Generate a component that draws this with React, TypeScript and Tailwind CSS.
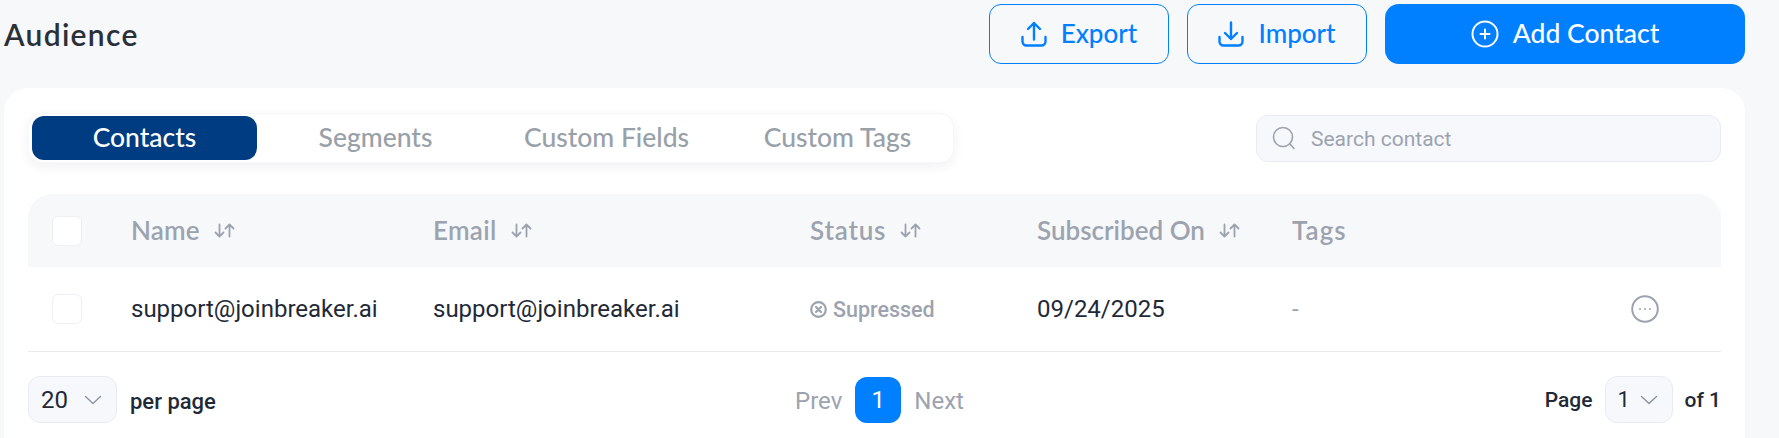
const head = "font-['Lato',sans-serif]";

function SortIcon() {
  return (
    <svg width="21" height="15" viewBox="0 0 21 15" fill="none" stroke="#9ca3af" strokeWidth="1.800" strokeLinecap="round" strokeLinejoin="round" className="shrink-0">
      <path d="M5.500 1.500v12M1.500 9.500l4 4 4-4" />
      <path d="M15.500 13.500v-12M11.500 5.500l4-4 4 4" />
    </svg>
  );
}

function Chevron() {
  return (
    <svg width="18" height="10" viewBox="0 0 18 10" fill="none" stroke="#8b93a1" strokeWidth="1.400" strokeLinecap="round" strokeLinejoin="round">
      <path d="M1.500 1.500L9 8.500l7.500-7" />
    </svg>
  );
}

function Tray({ up }: { up: boolean }) {
  return (
    <svg width="26" height="26" viewBox="0 0 26 26" fill="none" stroke="#007fff" strokeWidth="2.400" strokeLinecap="round" strokeLinejoin="round">
      <path d="M1.500 16v4.500a4 4 0 0 0 4 4h15a4 4 0 0 0 4-4V16" />
      {up ? <path d="M13 18.500V2M7 8l6-6 6 6" /> : <path d="M13 1.500V18M7 12l6 6 6-6" />}
    </svg>
  );
}

function Header({ label, sort, className, labelClass }: { label: string; sort?: boolean; className: string; labelClass: string }) {
  return (
    <div className={`flex items-center gap-[14px] ${className}`}>
      <span className={`${head} text-[26px] font-semibold text-[#9ca3af] ${labelClass}`}>{label}</span>
      {sort && <SortIcon />}
    </div>
  );
}

function Checkbox() {
  return <div className="w-[30px] h-[30px] rounded-[6px] bg-white border border-[#eef0f3] shrink-0" />;
}

export default function App() {
  return (
    <div className="w-[1779px] h-[438px] overflow-hidden bg-[#f7f8fa] pl-[4px] pr-[34px] pt-[4px] font-['Roboto',sans-serif]">
      <div className="flex items-center justify-between h-[60px]">
        <h1 className={`${head} text-[30px] font-semibold tracking-[1.300px] text-[#2b2f38]`}>Audience</h1>
        <div className="flex gap-[18px]">
          <button className="w-[180px] h-[60px] rounded-[12px] border border-[#007fff] flex items-center justify-center gap-[14px] text-[#007fff]">
            <Tray up />
            <span className={`${head} text-[26px] font-medium pb-[2px]`}>Export</span>
          </button>
          <button className="w-[180px] h-[60px] rounded-[12px] border border-[#007fff] flex items-center justify-center gap-[14px] text-[#007fff]">
            <Tray up={false} />
            <span className={`${head} text-[26px] font-medium pb-[2px]`}>Import</span>
          </button>
          <button className="w-[360px] h-[60px] rounded-[14px] bg-[#007fff] flex items-center justify-center gap-[14px] text-white">
            <svg width="28" height="28" viewBox="0 0 28 28" fill="none" stroke="#fff" strokeWidth="2" strokeLinecap="round">
              <circle cx="14" cy="14" r="12.500" />
              <path d="M14 9.500v9M9.500 14h9" />
            </svg>
            <span className={`${head} text-[26.500px] font-medium`}>Add Contact</span>
          </button>
        </div>
      </div>

      <div className="mt-[24px] h-[400px] rounded-t-[24px] bg-white px-[24px] pt-[25px]">
        <div className="flex items-center justify-between h-[50px]">
          <div className="flex gap-[6px] px-[3px] py-[2px] h-[50px] rounded-[14px] bg-white border border-[#f5f7fb] shadow-[0_4px_12px_rgba(0,0,0,0.06)]">
            <div className={`${head} w-[225px] h-[44px] rounded-[12px] bg-[#003c82] text-white text-[26.500px] font-medium flex items-center justify-center`}>Contacts</div>
            <div className={`${head} w-[225px] h-[44px] text-[#98a0a8] text-[26.500px] font-medium flex items-center justify-center`}>Segments</div>
            <div className={`${head} w-[225px] h-[44px] text-[#98a0a8] text-[26.500px] font-medium flex items-center justify-center`}>Custom Fields</div>
            <div className={`${head} w-[225px] h-[44px] text-[#98a0a8] text-[26.500px] font-medium flex items-center justify-center`}>Custom Tags</div>
          </div>
          <div className="w-[465px] h-[47px] rounded-[12px] bg-[#f7f8fc] border border-[#e8ecf2] flex items-center pl-[15px] gap-[16px]">
            <svg width="23" height="24" viewBox="0 0 23 24" fill="none" stroke="#9ca3af" strokeWidth="1.600" strokeLinecap="round">
              <circle cx="11" cy="11" r="9.500" />
              <path d="M18 18l4 4.500" />
            </svg>
            <span className="text-[21px] text-[#9ca3af] pt-[3px]">Search contact</span>
          </div>
        </div>

        <div className="mt-[31px] h-[73px] rounded-t-[24px] bg-[#f7f8fa] flex items-center pl-[24px]">
          <Checkbox />
          <Header label="Name" sort className="ml-[49px] w-[302px]" labelClass="tracking-[0.200px]" />
          <Header label="Email" sort className="w-[377px]" labelClass="tracking-[0.300px]" />
          <Header label="Status" sort className="w-[227px]" labelClass="tracking-[0.800px]" />
          <Header label="Subscribed On" sort className="w-[255px]" labelClass="tracking-[0px]" />
          <Header label="Tags" className="" labelClass="tracking-[1px]" />
        </div>

        <div className="h-[85px] border-b border-[#e8eaed] flex items-center pl-[24px] text-[24px] text-[#1f2937]">
          <Checkbox />
          <div className="ml-[49px] w-[302px]">support@joinbreaker.ai</div>
          <div className="w-[377px]">support@joinbreaker.ai</div>
          <div className="w-[227px] flex items-center gap-[6px] text-[21.500px] font-medium text-[#9ca3af]">
            <svg width="17" height="17" viewBox="0 0 17 17" fill="none" stroke="#9ca3af" strokeWidth="2.200" strokeLinecap="round">
              <circle cx="8.500" cy="8.500" r="7.300" />
              <path d="M6 6l5 5M11 6l-5 5" />
            </svg>
            <span className="pt-[2px]">Supressed</span>
          </div>
          <div className="w-[255px]">09/24/2025</div>
          <div className="w-[339px] text-[#9ca3af]">-</div>
          <svg width="28" height="28" viewBox="0 0 28 28" fill="none" className="shrink-0">
            <circle cx="14" cy="14" r="12.800" stroke="#9ca3af" strokeWidth="2" />
            <circle cx="9" cy="14" r="1" fill="#9ca3af" />
            <circle cx="14" cy="14" r="1" fill="#9ca3af" />
            <circle cx="19" cy="14" r="1" fill="#9ca3af" />
          </svg>
        </div>

        <div className="mt-[24px] flex items-center justify-between h-[47px]">
          <div className="flex items-center w-[410px]">
            <div className="w-[89px] h-[47px] rounded-[12px] bg-[#f7f8fc] border border-[#e8ecf2] flex items-center pl-[12px] gap-[16px] text-[24px] text-[#1f2937]">
              20
              <Chevron />
            </div>
            <span className="ml-[13px] pt-[4px] text-[22px] font-medium text-[#1f2937]">per page</span>
          </div>
          <div className="flex items-center gap-[13px] text-[24px] text-[#9ca3af]">
            <span className="pt-[2px]">Prev</span>
            <div className="w-[46px] h-[46px] rounded-[12px] bg-[#007fff] text-white flex items-center justify-center">1</div>
            <span className="pt-[2px]">Next</span>
          </div>
          <div className="flex items-center justify-end w-[400px] text-[21px] font-medium text-[#1f2937]">
            <span className="pt-[2px]">Page</span>
            <div className="ml-[12px] w-[68px] h-[47px] rounded-[12px] bg-[#f7f8fc] border border-[#e8ecf2] flex items-center pl-[12px] gap-[10px] text-[22px] font-normal">
              1
              <Chevron />
            </div>
            <span className="ml-[12px] pt-[2px]">of 1</span>
          </div>
        </div>
      </div>
    </div>
  );
}
